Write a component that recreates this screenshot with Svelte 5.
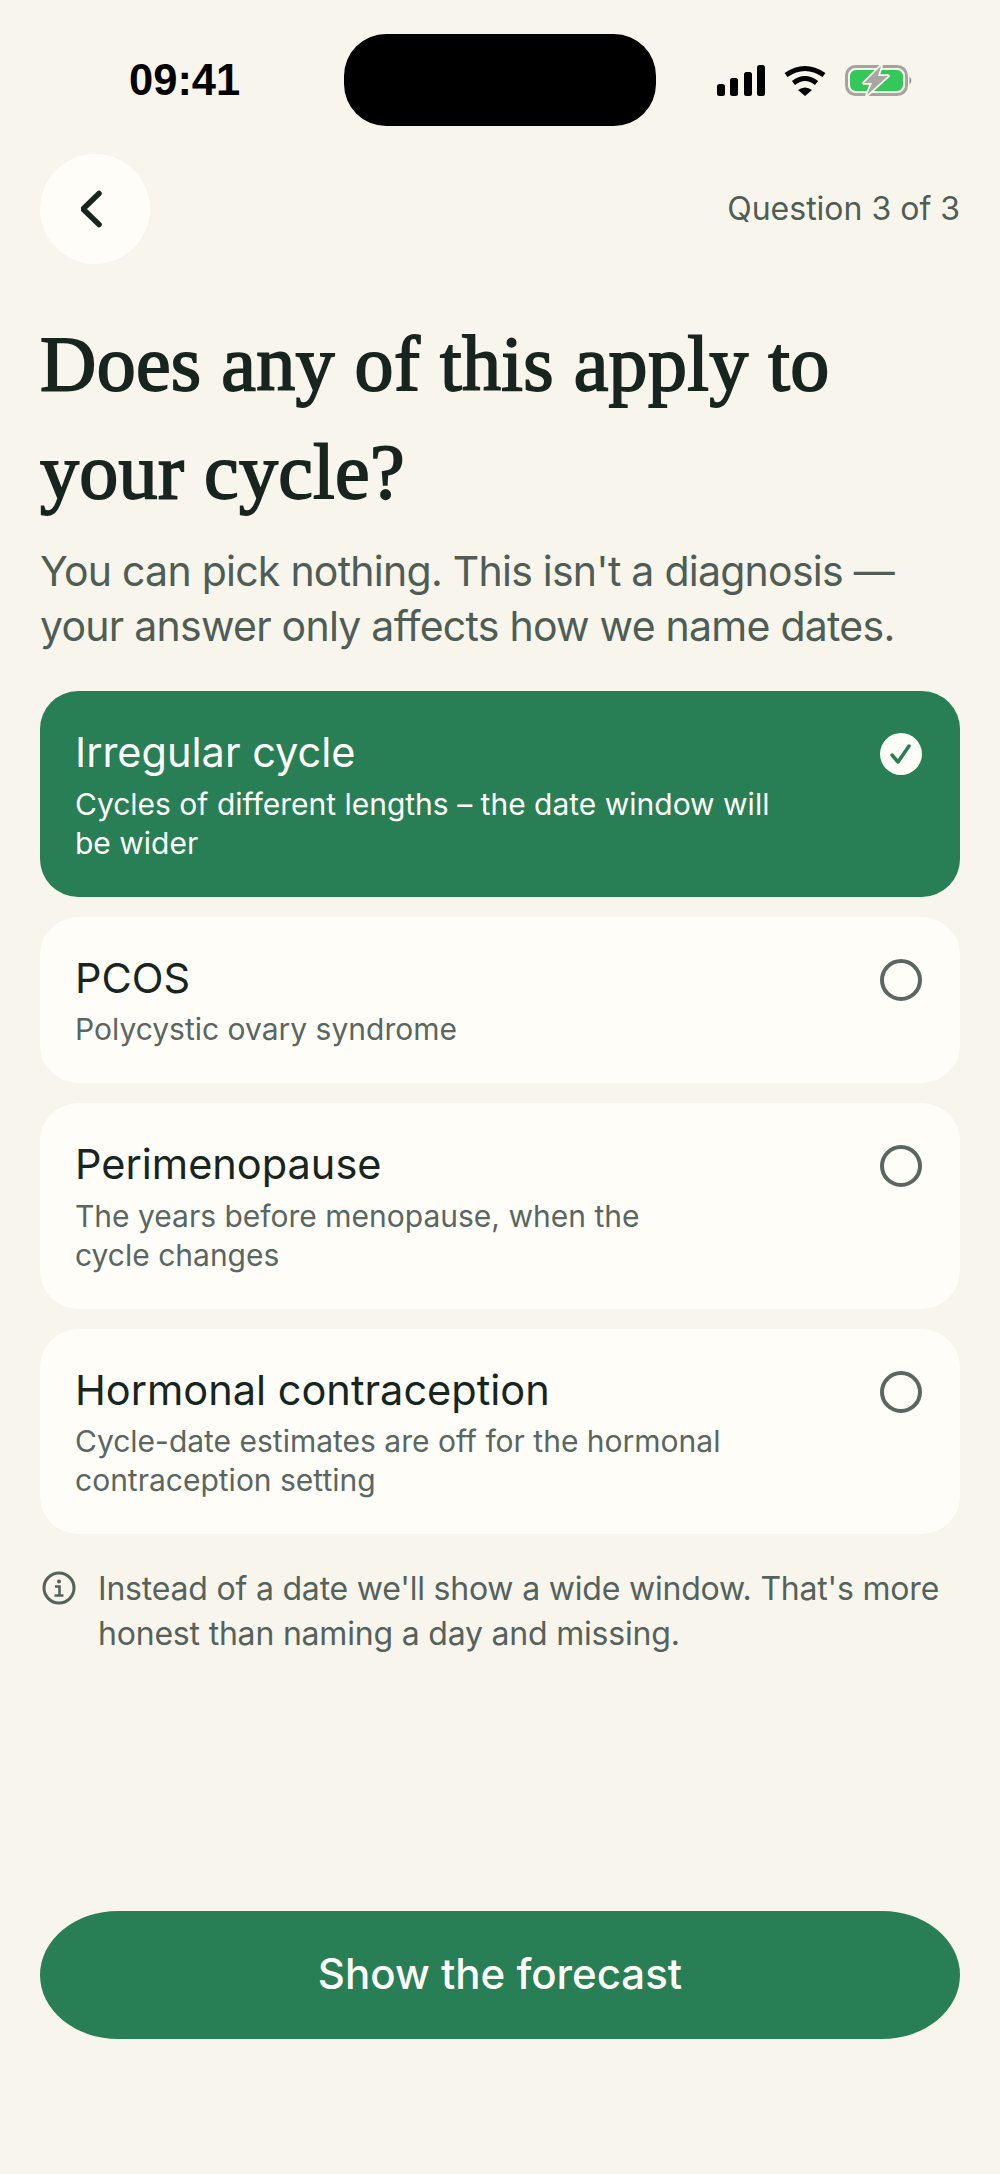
<script>
	const options = [
		{ title: 'Irregular cycle', desc: 'Cycles of different lengths – the date window will\nbe wider', selected: true },
		{ title: 'PCOS', desc: 'Polycystic ovary syndrome', selected: false },
		{ title: 'Perimenopause', desc: 'The years before menopause, when the\ncycle changes', selected: false },
		{ title: 'Hormonal contraception', desc: 'Cycle-date estimates are off for the hormonal\ncontraception setting', selected: false }
	];
</script>

<div class="screen">
	<div class="status">
		<span class="time">09:41</span>
		<div class="island"></div>
		<div class="status-icons">
			<svg width="48" height="31" viewBox="0 0 48 31" fill="#000">
				<rect x="0" y="19" width="8" height="12" rx="2.5" />
				<rect x="13" y="13" width="8" height="18" rx="2.5" />
				<rect x="27" y="7" width="8" height="24" rx="2.5" />
				<rect x="40" y="0" width="8" height="31" rx="2.5" />
			</svg>
			<svg width="42" height="31" viewBox="0 0 42 31" fill="none" stroke="#000">
				<path d="M2 10 Q21 -3 40 10" stroke-width="5" />
				<path d="M9.5 18 Q21 9 32.5 18" stroke-width="5" />
				<path d="M14 25 Q21 20 28 25 L21 31 Z" fill="#000" stroke="none" />
			</svg>
			<svg width="68" height="31" viewBox="0 0 68 31">
				<rect x="1.5" y="1.5" width="60" height="28" rx="9" fill="none" stroke="#a5a49c" stroke-width="3" />
				<rect x="5" y="5" width="53" height="21" rx="6" fill="#34c85a" />
				<path d="M64.5 11.5 Q68 15.5 64.5 19.5 Z" fill="#8d8c85" />
				<path d="M36 1 L19 18 L27 18 L22 30 L43 11 L33 11 Z" fill="#a8a79f" stroke="#f8f5ed" stroke-width="3.5" stroke-linejoin="round" paint-order="stroke" />
			</svg>
		</div>
	</div>

	<div class="topbar">
		<button class="back" aria-label="Back">
			<svg width="28" height="42" viewBox="0 0 28 42" fill="none" stroke="#18251f" stroke-width="5.5" stroke-linecap="round" stroke-linejoin="round">
				<path d="M18 5.5 L2 21 L18 36.5" />
			</svg>
		</button>
		<span class="progress">Question 3 of 3</span>
	</div>

	<h1>Does any of this apply to<br />your cycle?</h1>
	<p class="sub">You can pick nothing. This isn't a diagnosis —<br />your answer only affects how we name dates.</p>

	<div class="options">
		{#each options as opt}
			<div class="card" class:selected={opt.selected}>
				<div class="copy">
					<div class="title">{opt.title}</div>
					<div class="desc">{opt.desc}</div>
				</div>
				{#if opt.selected}
					<svg class="mark" width="42" height="42" viewBox="0 0 42 42">
						<circle cx="21" cy="21" r="21" fill="#fefdf8" />
						<path d="M12 22 L18 29 L29 13" fill="none" stroke="#287f56" stroke-width="3.5" stroke-linecap="round" stroke-linejoin="round" />
					</svg>
				{:else}
					<svg class="mark" width="42" height="42" viewBox="0 0 42 42">
						<circle cx="21" cy="21" r="19" fill="none" stroke="#5a6660" stroke-width="4" />
					</svg>
				{/if}
			</div>
		{/each}
	</div>

	<div class="note">
		<svg width="34" height="34" viewBox="0 0 34 34" fill="none" stroke="#55625b" stroke-width="3">
			<circle cx="17" cy="17" r="15" />
			<circle cx="17" cy="10.5" r="2" fill="#55625b" stroke="none" />
			<path d="M13 15.5 H17.5 V24 M12.5 24.5 H21.5" stroke-width="2.6" />
		</svg>
		<p>Instead of a date we'll show a wide window. That's more<br />honest than naming a day and missing.</p>
	</div>

	<button class="cta">Show the forecast</button>
</div>

<style>
	:global(body) {
		background: #f8f5ed;
	}

	.screen {
		min-height: 2174px;
		box-sizing: border-box;
		display: flex;
		flex-direction: column;
		padding: 34px 40px 135px;
		font-family: Inter, "Liberation Sans", sans-serif;
		color: #18251f;
		background: #f8f5ed;
	}

	.status {
		display: flex;
		align-items: center;
		height: 92px;
		padding-left: 89px;
	}

	.time {
		width: 215px;
		font-family: "Liberation Sans", sans-serif;
		font-weight: 700;
		font-size: 43.5px;
		color: #000;
	}

	.island {
		width: 312px;
		height: 92px;
		border-radius: 42px;
		background: #000;
	}

	.status-icons {
		display: flex;
		align-items: center;
		gap: 19px;
		margin-left: 61px;
	}

	.topbar {
		display: flex;
		justify-content: space-between;
		align-items: center;
		margin-top: 28px;
	}

	.back {
		width: 110px;
		height: 110px;
		padding: 0;
		border: 0;
		border-radius: 50%;
		background: #fefdf8;
		display: flex;
		align-items: center;
		justify-content: center;
	}

	.progress {
		font-size: 32px;
		color: #4f5d55;
		margin-top: -2px;
	}

	h1 {
		margin: 46px 0 0;
		font-family: "Liberation Serif", serif;
		font-weight: 400;
		-webkit-text-stroke: 1.8px #18251f;
		letter-spacing: 0.3px;
		font-size: 78px;
		line-height: 108px;
		color: #18251f;
	}

	.sub {
		margin: 18px 0 0;
		font-size: 41px;
		line-height: 55px;
		letter-spacing: -0.75px;
		color: #4f5d55;
	}

	.options {
		display: flex;
		flex-direction: column;
		gap: 20px;
		margin-top: 37px;
	}

	.card {
		display: flex;
		justify-content: space-between;
		padding: 36px 38px 34px 35px;
		border-radius: 38px;
		background: #fefdf8;
	}

	.card.selected {
		background: #287f56;
		color: #fefdf8;
	}

	.title {
		font-size: 41.5px;
		line-height: 50px;
	}

	.desc {
		margin-top: 7.5px;
		font-size: 30px;
		line-height: 39px;
		color: #5a6660;
		white-space: pre-line;
	}

	.selected .desc {
		color: #fefdf8;
	}

	.mark {
		flex: none;
		margin-top: 6px;
	}

	.note {
		display: flex;
		gap: 22px;
		margin-top: 32px;
		padding-left: 2px;
		font-size: 32px;
		line-height: 45px;
		letter-spacing: -0.2px;
		color: #55625b;
	}

	.note svg {
		flex: none;
		margin-top: 5px;
	}

	.note p {
		margin: 0;
	}

	.cta {
		margin-top: auto;
		height: 128px;
		padding-bottom: 4px;
		border: 0;
		border-radius: 78px / 64px;
		background: #287f56;
		color: #fefdf8;
		font-family: inherit;
		font-size: 42px;
		font-weight: 500;
	}
</style>
